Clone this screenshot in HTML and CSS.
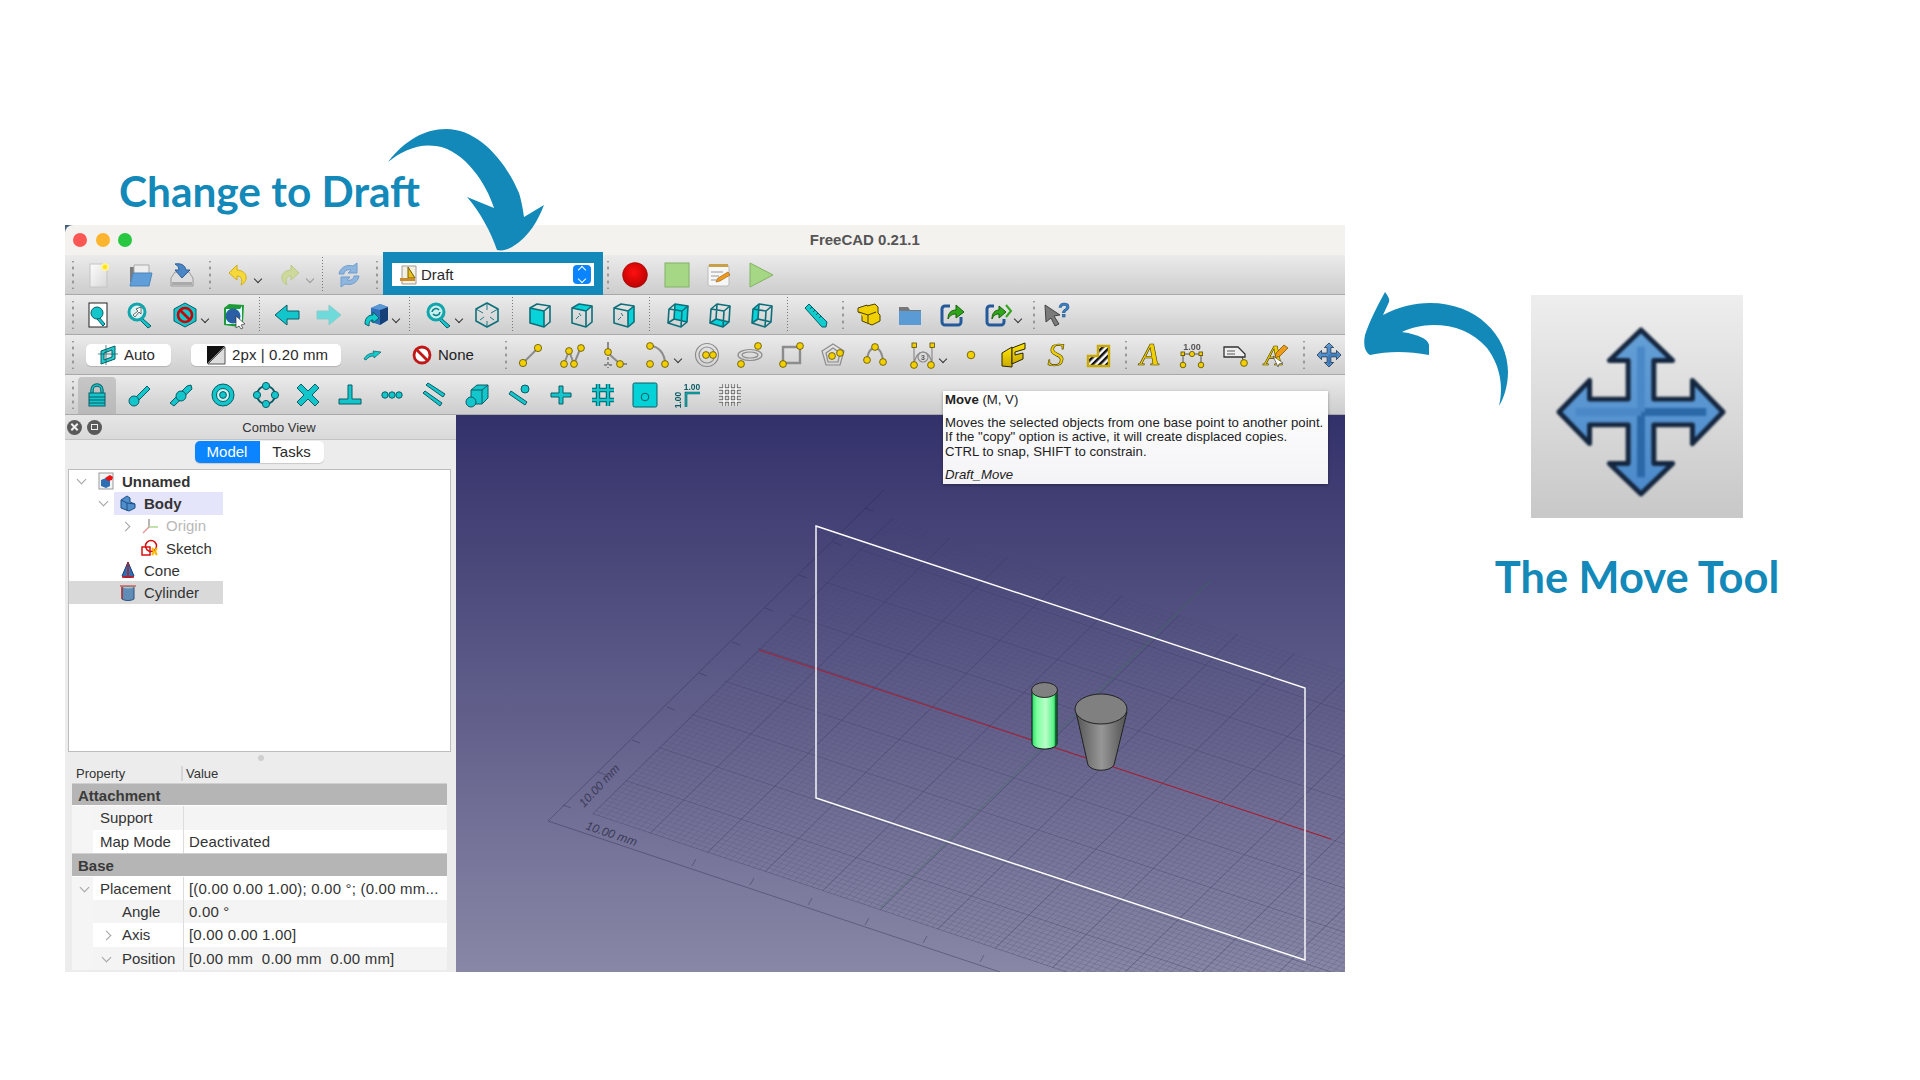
FILE: index.html
```html
<!DOCTYPE html>
<html lang="en">
<head>
    <meta charset="UTF-8">
    <title>FreeCAD Draft Move Tool</title>
    <link rel="stylesheet" href="styles.css">
</head>
<body>
<svg class="defs" width="0" height="0">
    <defs>
        <linearGradient id="moveFill" x1="0" y1="0" x2="0" y2="1">
            <stop offset="0" stop-color="#649fd6"/><stop offset="1" stop-color="#4b8acb"/>
        </linearGradient>
        <linearGradient id="docFill" x1="0" y1="0" x2="1" y2="1">
            <stop offset="0" stop-color="#fdfdfd"/><stop offset="1" stop-color="#d8d8d8"/>
        </linearGradient>
        <linearGradient id="yellowFill" x1="0" y1="0" x2="0" y2="1">
            <stop offset="0" stop-color="#ffe600"/><stop offset="1" stop-color="#c9a800"/>
        </linearGradient>
        <radialGradient id="recFill" cx=".45" cy=".4" r=".65">
            <stop offset="0" stop-color="#ff1010"/><stop offset="1" stop-color="#b80000"/>
        </radialGradient>
        <pattern id="stripes" width="5" height="5" patternUnits="userSpaceOnUse" patternTransform="rotate(45)">
            <rect width="5" height="5" fill="#fff"/><rect width="2.5" height="5" fill="#111"/>
        </pattern>
        <symbol id="move" viewBox="-90 -90 180 180">
            <path fill="url(#moveFill)" stroke="#14263f" stroke-width="5" stroke-linejoin="round" d="M0-83 32-52H13V-13H52V-32L83 0 52 32V13H13V52H32L0 83-32 52H-13V13H-52V32L-83 0-52-32V-13H-13V-52H-32Z"/>
            <path stroke="#2a68a8" stroke-width="8" fill="none" d="M0 0H66M0 0V66"/>
            <path stroke="#4a88c8" stroke-width="8" fill="none" d="M0 0H-66M0 0V-66"/>
        </symbol>
        <symbol id="cube" viewBox="0 0 26 26">
            <path class="edge" d="M3 6 10 2 23 4 23 20 17 25 3 21Z"/>
            <path class="edge" d="M3 6 17 9 23 4M17 9V25"/>
        </symbol>
        <symbol id="cubeBack" viewBox="0 0 26 26">
            <path class="edge" d="M4 7 10 2 23 4 22 20 16 25 3 21Z"/>
            <path class="edge" d="M4 7 17 9 23 4M17 9 16 25M10 2 9 17 3 21M9 17 22 20"/>
        </symbol>
        <symbol id="folder" viewBox="0 0 26 26">
            <path fill="#777" d="M2 5h9l2 3h11v6H2z"/>
            <path fill="#5b9bd5" d="M2 9h22v14H2z"/>
        </symbol>
    </defs>
</svg>

<div class="slide">
    <section class="shot">
        <h2 class="headline headline-left">Change to Draft</h2>
        <div class="window">
            <div class="titlebar">
                <i class="light light-red"></i><i class="light light-amber"></i><i class="light light-green"></i>
                <span class="title-text">FreeCAD 0.21.1</span>
            </div>

            <div class="tb">
                <i class="grip"></i>
                <span class="btn"><svg class="ico" viewBox="0 0 26 26"><rect x="5" y="2" width="17" height="23" fill="url(#docFill)" stroke="#c4c4c4"/><circle cx="20" cy="5" r="4" fill="#fff39a"/><circle cx="20" cy="5" r="2.2" fill="#ffe600"/></svg></span>
                <span class="btn"><svg class="ico" viewBox="0 0 26 26"><path fill="#7c7c7c" d="M3 5h19v15H3z"/><path fill="#eee" stroke="#aaa" d="M7 3h15v10H7z"/><path fill="#5f9ed8" stroke="#4c85bb" d="M6 11h19l-3 13H3z"/></svg></span>
                <span class="btn"><svg class="ico" viewBox="0 0 26 26"><path fill="#ddd" stroke="#999" d="M2 16l4-6h14l4 6v8H2z"/><path fill="#aaa" d="M3 20h20v3H3z"/><path fill="#4a85c5" stroke="#2d5f96" d="M6 2c6-1 10 1 11 6h4l-8 8-7-8h4c0-3-2-5-4-6z"/></svg></span>
                <i class="grip"></i>
                <span class="dd dd-52"><svg class="ico" viewBox="0 0 26 26"><path fill="#f6d83a" stroke="#d0ae10" d="M12 3 4 11l8 7v-4c4 0 6 3 4 9 7-3 8-14-4-15z"/></svg><i class="caret"></i></span>
                <span class="dd dd-52 faded"><svg class="ico" viewBox="0 0 26 26"><path fill="#cdd99a" stroke="#bac98a" d="M14 3l8 8-8 7v-4c-4 0-6 3-4 9-7-3-8-14 4-15z"/></svg><i class="caret"></i></span>
                <i class="sep sep-short"></i>
                <span class="btn"><svg class="ico" viewBox="0 0 26 26"><path fill="#8fb6de" stroke="#6d9ccd" d="M3 12C4 6 10 2 17 4l4-3v10h-9l3-3c-4-1-7 1-7 4z"/><path fill="#8fb6de" stroke="#6d9ccd" d="M23 14c-1 6-7 10-14 8l-4 3V15h9l-3 3c4 1 7-1 7-4z"/></svg></span>
                <i class="grip"></i>
                <div class="combo">
                    <svg class="combo-ico" viewBox="0 0 20 20"><path fill="#f4f0e0" stroke="#999" d="M3 1h14v18H3z"/><path fill="#e8c020" stroke="#705a00" d="M9 2v11h7z"/><path fill="#c98b2b" d="M1 13h15v3H1z"/></svg>
                    <span class="combo-label">Draft</span>
                    <span class="spinner"><i class="spin-up"></i><i class="spin-down"></i></span>
                </div>
                <i class="grip ml10"></i>
                <span class="btn nudge-1"><svg class="ico" viewBox="0 0 26 26"><circle cx="13" cy="13" r="12.4" fill="url(#recFill)" stroke="#8f0000" stroke-width=".6"/></svg></span>
                <span class="btn"><svg class="ico" viewBox="0 0 26 26"><rect x="1" y="1" width="24" height="24" fill="#a6d785" stroke="#82b264"/></svg></span>
                <span class="btn"><svg class="ico" viewBox="0 0 26 26"><rect x="2" y="3" width="21" height="21" rx="2" fill="#f7f7f7" stroke="#bbb"/><path fill="#c9a04a" d="M3 2h19v3H3z"/><path stroke="#999" d="M5 10h12M5 14h8M5 18h10"/><path fill="#f09a1a" stroke="#94590a" stroke-width=".6" d="M10 20l2-4 10-6 2 3-10 6z"/></svg></span>
                <span class="btn"><svg class="ico" viewBox="0 0 26 26"><path fill="#a6d785" stroke="#82b264" d="M2 1l23 12L2 25z"/></svg></span>
            </div>

            <div class="tb">
                <i class="grip"></i>
                <span class="btn"><svg class="ico" viewBox="0 0 26 26"><rect x="4" y="1" width="18" height="24" fill="#fff" stroke="#222"/><path class="t" d="M14 15l6 7-2 2-6-7z"/><circle class="t" cx="12" cy="11" r="6"/></svg></span>
                <span class="btn"><svg class="ico" viewBox="0 0 26 26"><path class="t" d="M15 16l9 8-3 2-8-8z"/><circle cx="10" cy="10" r="8" fill="#d8f2f2" stroke="#12a5ab" stroke-width="3"/><path fill="#fff" stroke="#333" stroke-width=".7" d="M14 5v7l-2-2-4 5-2-2 5-4-2-2z"/></svg></span>
                <span class="dd ml3 dd-49"><svg class="ico" viewBox="0 0 26 26"><path class="t" d="M13 1 24 7V19L13 25 2 19V7z"/><circle cx="13" cy="13" r="7" fill="#1cc" stroke="#c00" stroke-width="2.6"/><path stroke="#c00" stroke-width="2.6" d="M8 8l10 10"/></svg><i class="caret"></i></span>
                <span class="btn"><svg class="ico" viewBox="0 0 26 26"><path fill="#1d9c35" d="M3 6 8 2 23 3 22 20 18 25 3 23Z"/><path fill="#dff" d="M5 7h14l2-3v15l-3 3H5z"/><circle cx="12" cy="14" r="7.5" fill="#2a5fa5"/><path fill="#fff" stroke="#333" stroke-width=".7" d="M15 14l9 8-4 1 2 3-2 1-2-3-3 2z"/></svg></span>
                <i class="sep"></i>
                <span class="btn"><svg class="ico" viewBox="0 0 26 26"><path class="t" d="M1 13 13 3V9H25V17H13V23Z"/></svg></span>
                <span class="btn"><svg class="ico" viewBox="0 0 26 26"><path fill="#6fdada" stroke="#8ccccc" d="M25 13 13 3V9H1V17H13V23Z"/></svg></span>
                <span class="dd ml5"><svg class="ico" viewBox="0 0 26 26"><path fill="#2f6fb8" d="M8 6 17 2 25 5V18L17 23 8 20Z"/><path fill="#163f78" d="M17 8 25 5V18L17 23Z"/><path fill="#5b96d5" d="M8 6 17 2 25 5 17 8Z"/><path fill="#1cc" stroke="#0a5c66" d="M2 22c0-7 4-9 8-9v-3l6 6-6 5v-3c-3 0-4 2-4 6z"/></svg><i class="caret"></i></span>
                <i class="sep"></i>
                <span class="dd ml2 dd-48"><svg class="ico" viewBox="0 0 26 26"><path class="t" d="M15 16l9 8-3 2-8-8z"/><circle cx="10" cy="10" r="8" fill="#c8eeee" stroke="#12a5ab" stroke-width="3"/><path fill="none" stroke="#0a7f85" stroke-width="1.6" d="M6 10a4 4 0 0 1 7-2M14 10a4 4 0 0 1-7 2"/></svg><i class="caret"></i></span>
                <span class="btn"><svg class="ico" viewBox="0 0 26 26"><path class="edge" d="M13 1 24 7V19L13 25 2 19V7z"/><path class="edge thin" d="M13 1v7M2 7l7 4M24 7l-7 4M6 18l4-3M20 18l-4-3M13 25v-6"/></svg></span>
                <i class="sep"></i>
                <span class="btn"><svg class="ico" viewBox="0 0 26 26"><path class="face" d="M3 6 17 9V25L3 21Z"/><use href="#cube"/></svg></span>
                <span class="btn"><svg class="ico" viewBox="0 0 26 26"><path class="face" d="M3 6 10 2 23 4 17 9Z"/><use href="#cube"/><path class="edge thin" d="M7 17l3-3M12 14l-2-3"/></svg></span>
                <span class="btn"><svg class="ico" viewBox="0 0 26 26"><path class="face" d="M17 9 23 4V20L17 25Z"/><use href="#cube"/><path class="edge thin" d="M7 18l3-3M12 14l-2-3"/></svg></span>
                <i class="sep"></i>
                <span class="btn ml1"><svg class="ico" viewBox="0 0 26 26"><path class="face" d="M10 2 23 4 22 20 9 17Z"/><use href="#cubeBack"/></svg></span>
                <span class="btn"><svg class="ico" viewBox="0 0 26 26"><path class="face" d="M3 21 9 17 22 20 16 25Z"/><use href="#cubeBack"/></svg></span>
                <span class="btn"><svg class="ico" viewBox="0 0 26 26"><path class="face" d="M4 7 10 2 9 17 3 21Z"/><use href="#cubeBack"/></svg></span>
                <i class="sep"></i>
                <span class="btn"><svg class="ico" viewBox="0 0 26 26"><path fill="#1cc" stroke="#0a5c66" d="M3 6 7 2 25 20 24 25 20 25Z"/><path stroke="#0a5c66" d="M8 7l2-2M11 10l2-2M14 13l2-2M17 16l2-2"/></svg></span>
                <i class="grip"></i>
                <span class="btn nudge-3"><svg class="ico" viewBox="0 0 26 26"><path class="y" d="M12 4l8-2 3 3v6l2 2v6l-8 4-10-4v-7l-4-2V6l9-3z"/><path class="y" d="M4 10l9 3v8M13 13l8-3"/></svg></span>
                <span class="btn"><svg class="ico" viewBox="0 0 26 26"><use href="#folder"/></svg></span>
                <span class="btn"><svg class="ico" viewBox="0 0 26 26"><path fill="none" stroke="#245a9a" stroke-width="3" d="M11 4H6a3 3 0 0 0-3 3v13a3 3 0 0 0 3 3h13a3 3 0 0 0 3-3v-5"/><path fill="#2fa51a" stroke="#15610a" d="M9 17c0-6 3-9 8-9V3l8 7-8 6v-4c-3 0-6 1-8 5z"/></svg></span>
                <span class="dd ml4"><svg class="ico" viewBox="0 0 26 26"><path fill="none" stroke="#245a9a" stroke-width="3" d="M9 4H5a3 3 0 0 0-3 3v13a3 3 0 0 0 3 3h11a3 3 0 0 0 3-3v-3"/><path fill="#2fa51a" stroke="#15610a" d="M7 17c0-6 3-9 7-9V4l7 6-7 6v-4c-3 0-5 1-7 5z"/><path fill="none" stroke="#2fa51a" stroke-width="2" d="M21 3l5 6-5 6"/></svg><i class="caret"></i></span>
                <i class="grip"></i>
                <span class="btn nudge-5"><svg class="ico" viewBox="0 0 26 26"><path fill="#7a7a7a" stroke="#444" d="M1 3l15 10-6 1 5 8-4 2-4-8-5 4z"/><text class="help-mark" x="14" y="15">?</text></svg></span>
            </div>

            <div class="tb">
                <i class="grip"></i>
                <span class="pill pill-auto"><svg class="pill-ico" viewBox="0 0 20 20"><path fill="#2cc" stroke="#0a5c66" d="M3 6 17 1V14L3 19Z"/><path fill="#e8e8e8" stroke="#0a5c66" d="M6 8 14 5V12L6 15Z"/><path stroke="#0a5c66" stroke-width=".7" d="M0 9H20M8 0V20"/></svg>Auto</span>
                <span class="pill pill-line"><svg class="pill-ico" viewBox="0 0 20 20"><path fill="#111" d="M1 1h18L1 19z"/><path fill="#ddd" stroke="#555" d="M19 2v17H2z"/></svg>2px | 0.20 mm</span>
                <span class="btn ml10"><svg class="ico" viewBox="0 0 26 26"><path fill="#1cc" stroke="#0a5c66" stroke-width=".7" d="M5 17c2-4 6-6 10-6l-1-2 8 1-7 6v-2c-3 0-6 1-8 4z"/></svg></span>
                <span class="none-item"><svg class="none-ico" viewBox="0 0 20 20"><circle cx="10" cy="10" r="8" fill="#fff" stroke="#c01818" stroke-width="2.8"/><path stroke="#c01818" stroke-width="2.8" d="M4 4l12 12"/></svg>None</span>
                <i class="grip"></i>
                <span class="btn nudge-4"><svg class="ico" viewBox="0 0 26 26"><path class="g" d="M6 21 21 6"/><circle class="n" cx="6" cy="21" r="3.6"/><circle class="n" cx="21" cy="6" r="3.6"/></svg></span>
                <span class="btn"><svg class="ico" viewBox="0 0 26 26"><path class="g" d="M5 22 10 9 15 22 22 5"/><circle class="n" cx="5" cy="22" r="3.4"/><circle class="n" cx="10" cy="9" r="3.4"/><circle class="n" cx="15" cy="22" r="3.4"/><circle class="n" cx="22" cy="6" r="3.4"/></svg></span>
                <span class="btn"><svg class="ico" viewBox="0 0 26 26"><path class="g" d="M7 0V11L19 22H26"/><path class="g dash" d="M7 15V26M3 23H13"/><circle class="n" cx="7" cy="10" r="3.4"/><circle class="n" cx="19" cy="22" r="3.4"/></svg></span>
                <span class="dd ml2"><svg class="ico" viewBox="0 0 26 26"><path class="g" d="M5 4C14 4 20 12 20 22"/><circle class="n" cx="5" cy="4" r="3.4"/><circle class="n" cx="5" cy="22" r="3.4"/><circle class="n" cx="20" cy="22" r="3.4"/></svg><i class="caret"></i></span>
                <span class="btn nudge-1"><svg class="ico" viewBox="0 0 26 26"><circle class="g thin" cx="13" cy="13" r="11.5"/><circle class="g thin" cx="13" cy="13" r="8"/><circle class="n" cx="12" cy="13" r="3.4"/><circle class="n" cx="19" cy="13" r="3.4"/></svg></span>
                <span class="btn ml1"><svg class="ico" viewBox="0 0 26 26"><ellipse class="g thin" cx="13" cy="13" rx="12" ry="5.5"/><ellipse class="g thin" cx="13" cy="13" rx="8" ry="3"/><circle class="n" cx="21" cy="4" r="3.4"/><circle class="n" cx="4" cy="22" r="3.4"/></svg></span>
                <span class="btn"><svg class="ico" viewBox="0 0 26 26"><path class="g box" d="M4 5H21V21H4Z"/><circle class="n" cx="21" cy="4" r="3.4"/><circle class="n" cx="4" cy="22" r="3.4"/></svg></span>
                <span class="btn nudge-1"><svg class="ico" viewBox="0 0 26 26"><path class="g thin" d="M13 2 24 9 20 23H6L2 9Z"/><path class="g thin" d="M13 6 20 11 18 20H8L6 11Z"/><circle class="n" cx="12" cy="14" r="3.4"/><circle class="n" cx="20" cy="11" r="3.4"/></svg></span>
                <span class="btn"><svg class="ico" viewBox="0 0 26 26"><path class="g" d="M5 18C6 9 9 6 13 6S20 10 21 19"/><circle class="n" cx="13" cy="5" r="3.4"/><circle class="n" cx="5" cy="18" r="3.4"/><circle class="n" cx="21" cy="20" r="3.4"/></svg></span>
                <span class="dd ml6"><svg class="ico" viewBox="0 0 26 26"><path class="g thin" d="M4 3V22M22 3V22M4 22C7 6 19 6 22 22"/><circle class="g thin" cx="13" cy="15" r="5"/><rect class="n" x="2" y="1" width="4.5" height="4.5"/><rect class="n" x="20" y="1" width="4.5" height="4.5"/><circle class="n" cx="4" cy="23" r="3.4"/><circle class="n" cx="21" cy="23" r="3.4"/><text class="tiny-dark" x="13" y="18">3</text></svg><i class="caret"></i></span>
                <span class="btn nudge-2"><svg class="ico" viewBox="0 0 26 26"><circle class="n" cx="13" cy="13" r="3.8"/></svg></span>
                <span class="btn"><svg class="ico" viewBox="0 0 26 26"><path class="yg" d="M2 11 12 5 12 25 2 24Z"/><path class="yg" d="M12 6 25 1V7L15 10V13L23 11V17L12 22Z"/></svg></span>
                <span class="btn ml1"><svg class="ico" viewBox="0 0 26 26"><text class="draft-letter letter-s" x="13" y="24">S</text></svg></span>
                <span class="btn"><svg class="ico" viewBox="0 0 26 26"><path fill="url(#stripes)" stroke="#c9a800" stroke-width="2.4" d="M3 14H13V4H24V24H3Z"/></svg></span>
                <i class="grip"></i>
                <span class="btn nudge-4"><svg class="ico" viewBox="0 0 26 26"><text class="draft-letter" x="13" y="23">A</text></svg></span>
                <span class="btn"><svg class="ico" viewBox="0 0 26 26"><text class="tiny-dark dim-text" x="13" y="8">1.00</text><path stroke="#555" d="M4 12V21M22 12V21M4 12H22"/><circle class="n" cx="13" cy="12" r="2.6"/><rect class="n" x="2" y="10" width="3.6" height="3.6"/><rect class="n" x="20" y="10" width="3.6" height="3.6"/><circle class="n" cx="4" cy="23" r="2.8"/><circle class="n" cx="22" cy="23" r="2.8"/></svg></span>
                <span class="btn ml1"><svg class="ico" viewBox="0 0 26 26"><path fill="#eee" stroke="#333" stroke-width="1.3" d="M2 5H16L23 12V15H2Z"/><path stroke="#555" d="M5 9h8M5 12h8"/><path fill="none" stroke="#333" d="M20 15 22 20"/><circle class="n" cx="22" cy="21" r="3.4"/></svg></span>
                <span class="btn nudge-1"><svg class="ico" viewBox="0 0 26 26"><text class="draft-letter letter-k" x="11" y="23">A</text><path fill="#f09a1a" stroke="#6a4a00" stroke-width=".7" d="M12 16l1-5L21 3l4 3-8 8z"/><path fill="#fff" stroke="#333" stroke-width=".6" d="M10 14l10 7-4 1-1 3z"/></svg></span>
                <i class="grip"></i>
                <span class="btn nudge-3"><svg class="ico" viewBox="0 0 26 26"><use href="#move"/></svg></span>
            </div>

            <div class="tb tb-snap">
                <i class="grip"></i>
                <span class="btn snap-lock"><svg class="ico" viewBox="0 0 26 26"><path fill="none" stroke="#0a5c66" stroke-width="3.4" d="M8 12V8a5 5 0 0 1 10 0v4"/><path fill="none" stroke="#1cc" stroke-width="1.4" d="M8 12V8a5 5 0 0 1 10 0v4"/><rect class="t" x="5" y="11" width="16" height="13"/><path stroke="#0a5c66" d="M5 15h16M5 18h16M5 21h16"/></svg></span>
                <span class="btn"><svg class="ico" viewBox="0 0 26 26"><path class="t" d="M10 15 21 4 24 7 13 18Z"/><circle class="t" cx="8" cy="19" r="5"/></svg></span>
                <span class="btn"><svg class="ico" viewBox="0 0 26 26"><path class="t" d="M2 21 19 4 23 3 24 7 6 24Z"/><circle class="t" cx="13" cy="14" r="5"/></svg></span>
                <span class="btn"><svg class="ico" viewBox="0 0 26 26"><circle class="t" cx="13" cy="13" r="11"/><circle cx="13" cy="13" r="6.5" fill="#d4f0f0" stroke="#0a5c66"/><circle class="t" cx="13" cy="13" r="3.4"/></svg></span>
                <span class="btn"><svg class="ico" viewBox="0 0 26 26"><circle cx="13" cy="13" r="9" fill="none" stroke="#0a5c66" stroke-width="2"/><circle class="t" cx="13" cy="4" r="3.6"/><circle class="t" cx="13" cy="22" r="3.6"/><circle class="t" cx="4" cy="13" r="3.6"/><circle class="t" cx="22" cy="13" r="3.6"/></svg></span>
                <span class="btn"><svg class="ico" viewBox="0 0 26 26"><path class="t" d="M2 6 6 2 13 9 20 2 24 6 17 13 24 20 20 24 13 17 6 24 2 20 9 13Z"/></svg></span>
                <span class="btn"><svg class="ico" viewBox="0 0 26 26"><path class="t" d="M11 3h4v14h9v5H2v-5h9z"/></svg></span>
                <span class="btn"><svg class="ico" viewBox="0 0 26 26"><circle class="t" cx="6" cy="13" r="3.2"/><circle class="t" cx="13" cy="13" r="3.2"/><circle class="t" cx="20" cy="13" r="3.2"/></svg></span>
                <span class="btn"><svg class="ico" viewBox="0 0 26 26"><path class="t" d="M5 3 7 1 24 12 22 15Z"/><path class="t" d="M2 11 4 9 21 21 19 24Z"/></svg></span>
                <span class="btn"><svg class="ico" viewBox="0 0 26 26"><path class="t" d="M7 8 13 3H24V16L18 22H7Z"/><path class="t" d="M7 8H18V22M18 8 24 3"/><circle class="t" cx="7" cy="20" r="5"/></svg></span>
                <span class="btn"><svg class="ico" viewBox="0 0 26 26"><path class="t" d="M3 12 5 9 21 20 19 23Z"/><circle class="t" cx="19" cy="7" r="4"/></svg></span>
                <span class="btn"><svg class="ico" viewBox="0 0 26 26"><path class="t" d="M11 4h4v7h8v4h-8v7h-4v-7H3v-4h8z"/></svg></span>
                <span class="btn"><svg class="ico" viewBox="0 0 26 26"><path class="db" d="M8 2V24M18 2V24M2 8H24M2 18H24"/><path class="df" d="M8 2V24M18 2V24M2 8H24M2 18H24"/></svg></span>
                <span class="btn"><svg class="ico" viewBox="0 0 26 26"><rect x="1" y="1" width="24" height="24" rx="1.5" fill="#05d2d6" stroke="#0a5c66"/><circle cx="13" cy="15" r="3.8" fill="none" stroke="#0a5c66"/></svg></span>
                <span class="btn"><svg class="ico" viewBox="0 0 26 26"><text class="tiny-teal" x="17" y="8">1.00</text><text class="tiny-teal" transform="rotate(-90 6 18)" x="6" y="18">1.00</text><path fill="none" stroke="#0a5c66" stroke-width="2.6" d="M25 11H11V25"/><path fill="none" stroke="#1cc" stroke-width="1" d="M25 11H11V25"/></svg></span>
                <span class="btn"><svg class="ico" viewBox="0 0 26 26"><path fill="none" stroke="#666" stroke-width="3.4" d="M7 2V24M13 2V24M19 2V24M2 7H24M2 13H24M2 19H24"/><path fill="none" stroke="#fff" stroke-width="1.6" d="M7 2V24M13 2V24M19 2V24M2 7H24M2 13H24M2 19H24"/></svg></span>
            </div>

            <div class="workspace">
                <aside class="combo-view">
                    <div class="dock-head">
                        <span class="dock-btn"><i class="dock-x"></i></span>
                        <span class="dock-btn dock-float"><i></i></span>
                        <span class="dock-title">Combo View</span>
                    </div>
                    <div class="tabs">
                        <span class="tab tab-on">Model</span>
                        <span class="tab">Tasks</span>
                    </div>
                    <div class="tree">
                        <div class="node lvl0 strong">
                            <i class="chev open"></i>
                            <span class="cell"><svg class="node-ico" viewBox="0 0 18 18"><rect x="2" y="1" width="14" height="16" fill="#f4f4f4" stroke="#999"/><path fill="#2d6fb5" d="M4 8l5-2 4 2v6l-4 2-5-2z"/><path fill="#e11" d="M8 6l5-3 3 2-1 3-4 1z"/></svg>Unnamed</span>
                        </div>
                        <div class="node lvl1 strong">
                            <i class="chev open"></i>
                            <span class="cell cell-active"><svg class="node-ico" viewBox="0 0 18 18"><path fill="#4f8dcb" stroke="#1d4f88" d="M2 6l6-4 3 2v4l5 2v4l-6 3-8-3z"/><path fill="none" stroke="#1d4f88" d="M2 6l6 3v8M8 9l8 1"/></svg>Body</span>
                        </div>
                        <div class="node lvl2 dim">
                            <i class="chev"></i>
                            <span class="cell"><svg class="node-ico" viewBox="0 0 18 18"><path stroke="#999" stroke-width="1.4" d="M8 2V10"/><path stroke="#a8d48a" stroke-width="1.4" d="M8 10H17"/><path stroke="#e49a9a" stroke-width="1.4" d="M8 10 2 16"/></svg>Origin</span>
                        </div>
                        <div class="node lvl2">
                            <i class="chev none"></i>
                            <span class="cell"><svg class="node-ico" viewBox="0 0 18 18"><circle cx="10" cy="7" r="5.5" fill="none" stroke="#d81010" stroke-width="1.5"/><rect x="1" y="8" width="8" height="8" fill="none" stroke="#d81010" stroke-width="1.5"/><path fill="none" stroke="#f5b800" stroke-width="2.2" d="M11 9c2 2 2 5 0 7M16 9c-2 2-2 5 0 7"/></svg>Sketch</span>
                        </div>
                        <div class="node lvl1">
                            <i class="chev none"></i>
                            <span class="cell"><svg class="node-ico" viewBox="0 0 18 18"><path fill="#2d6fb5" stroke="#163f78" d="M9 1 15 15c-2 2-10 2-12 0z"/><path stroke="#d81010" stroke-width="1.3" d="M9 1V15M3 16H15"/></svg>Cone</span>
                        </div>
                        <div class="node lvl1 cell-selected">
                            <i class="chev none"></i>
                            <span class="cell"><svg class="node-ico" viewBox="0 0 18 18"><path fill="#5f8db8" stroke="#2a4f78" d="M3 3H15V15C12 17 6 17 3 15Z"/><ellipse cx="9" cy="3" rx="6" ry="1.5" fill="#9cc"/><path stroke="#c22" stroke-width="1.2" d="M1 2H17M3 3V15"/></svg>Cylinder</span>
                        </div>
                    </div>
                    <div class="splitter"><i></i></div>
                    <div class="props">
                        <div class="prop-head"><span>Property</span><span class="prop-head-val">Value</span></div>
                        <div class="prop-group">Attachment</div>
                        <div class="prop-row alt"><span class="prop-name">Support</span><span class="prop-val"></span></div>
                        <div class="prop-row"><span class="prop-name">Map Mode</span><span class="prop-val">Deactivated</span></div>
                        <div class="prop-group">Base</div>
                        <div class="prop-row"><span class="prop-name"><i class="chev open prop-chev"></i>Placement</span><span class="prop-val">[(0.00 0.00 1.00); 0.00 °; (0.00 mm...</span></div>
                        <div class="prop-row alt"><span class="prop-name deep">Angle</span><span class="prop-val">0.00 °</span></div>
                        <div class="prop-row"><span class="prop-name deep"><i class="chev prop-chev2"></i>Axis</span><span class="prop-val">[0.00 0.00 1.00]</span></div>
                        <div class="prop-row alt"><span class="prop-name deep"><i class="chev open prop-chev2"></i>Position</span><span class="prop-val">[0.00 mm&nbsp; 0.00 mm&nbsp; 0.00 mm]</span></div>
                    </div>
                </aside>

                <div class="viewport">
                    <svg class="scene" viewBox="456 415 889 557">
                        <defs>
                            <pattern id="gridMajor" width="100" height="100" patternUnits="userSpaceOnUse" patternTransform="matrix(.575 .192 .335 -.33 592 814)">
                                <path d="M0 0H100M0 0V100" stroke="#2b2b4e" stroke-opacity=".38" stroke-width="2" fill="none"/>
                            </pattern>
                            <pattern id="gridMinor" width="10" height="10" patternUnits="userSpaceOnUse" patternTransform="matrix(.575 .192 .335 -.33 592 814)">
                                <path d="M0 0H10M0 0V10" stroke="#2b2b4e" stroke-width="1" fill="none"/>
                            </pattern>
                            <linearGradient id="gridFade" gradientUnits="userSpaceOnUse" x1="0" y1="520" x2="0" y2="972">
                                <stop offset="0" stop-color="#fff" stop-opacity=".08"/><stop offset="1" stop-color="#fff" stop-opacity=".6"/>
                            </linearGradient>
                            <mask id="minorMask" maskUnits="userSpaceOnUse" x="456" y="415" width="889" height="557">
                                <rect x="456" y="415" width="889" height="557" fill="url(#gridFade)"/>
                            </mask>
                            <linearGradient id="cylFill" x1="0" y1="0" x2="1" y2="0">
                                <stop offset="0" stop-color="#21e063"/><stop offset=".2" stop-color="#7dff9f"/><stop offset=".55" stop-color="#b8ffc8"/><stop offset=".85" stop-color="#5cf58a"/><stop offset="1" stop-color="#0a7a35"/>
                            </linearGradient>
                            <linearGradient id="coneFill" x1="0" y1="0" x2="1" y2="0">
                                <stop offset="0" stop-color="#555"/><stop offset=".5" stop-color="#979797"/><stop offset="1" stop-color="#505050"/>
                            </linearGradient>
                        </defs>
                        <g mask="url(#minorMask)"><path fill="url(#gridMinor)" d="M592 814 1065 972H1345V670L888 517Z"/></g>
                        <path fill="url(#gridMajor)" d="M592 814 1065 972H1345V670L888 517Z"/>
                        <path class="ruler" d="M884 490 548 821 1000 972"/>
                        <path class="ruler" d="M692 866l4-7M750 885l4-7M808 905l4-7M865 925l4-7M923 943l4-7M980 962l4-7M563 805l8 3M598 772l8 3M632 740l8 3M667 707l8 3M699 673l8 3M732 642l8 3M765 608l8 3M799 575l8 3M833 542l8 3M865 508l8 3"/>
                        <text class="ruler-text" transform="translate(584 808) rotate(-47)">10.00 mm</text>
                        <text class="ruler-text" transform="translate(585 829) rotate(19)">10.00 mm</text>
                        <path class="axis-red" d="M759 650 1331 839"/>
                        <path class="axis-green" d="M1211 580 880 908"/>
                        <path class="plane" d="M816 526 1305 688V960L816 798Z"/>
                        <path fill="url(#cylFill)" stroke="#111" d="M1032 690H1057V743C1057 751 1032 751 1032 743Z"/>
                        <path stroke="#062" stroke-width="1.5" d="M1056 692V746"/>
                        <ellipse cx="1044.500" cy="690" rx="13" ry="7.500" fill="#808080" stroke="#222"/>
                        <path fill="url(#coneFill)" stroke="#222" d="M1076 712 1088 765C1092 772 1110 772 1114 765L1127 712Z"/>
                        <ellipse cx="1101" cy="709" rx="26" ry="15" fill="#808080" stroke="#222"/>
                    </svg>
                </div>
            </div>

            <div class="tooltip">
                <p class="tip-title"><b>Move</b> (M, V)</p>
                <p class="tip-body">Moves the selected objects from one base point to another point.<br>If the "copy" option is active, it will create displaced copies.<br>CTRL to snap, SHIFT to constrain.</p>
                <p class="tip-cmd">Draft_Move</p>
            </div>
        </div>
    </section>

    <section class="side">
        <div class="move-card"><svg class="move-big" viewBox="0 0 180 180"><use href="#move"/></svg></div>
        <h2 class="headline headline-right">The Move Tool</h2>
    </section>

    <svg class="callouts" viewBox="0 0 1920 1080">
        <path d="M388 162C405 140 425 129 446 129C478 129 505 160 519 193C522 203 523 210 524 217L544 205C538 220 530 236 512 247C507 250 502 251 497 250C491 232 480 212 467 197L494 208C487 185 465 150 436 146C418 143 400 152 388 162Z"/>
        <path d="M1385 292C1388 296 1390 299 1389 302L1383 315C1398 307 1414 303 1430 303C1476 303 1508 335 1508 372C1508 385 1504 398 1499 406C1503 390 1502 368 1487 348C1473 332 1455 325 1433 325C1422 325 1410 328 1402 332C1415 334 1428 338 1429 345L1429 355C1408 351 1388 351 1370 355C1365 352 1363 345 1365 335C1370 320 1378 305 1385 292Z"/>
    </svg>
</div>
</body>
</html>
```

FILE: styles.css
```css
* {
    box-sizing: border-box;
}
body {
    margin: 0;
    background: #fff;
    font-family: "Liberation Sans", Arial, sans-serif;
    color: #2a2a2a;
}
.defs {
    position: absolute;
}
.slide {
    position: relative;
    width: 1920px;
    height: 1080px;
    display: flex;
    overflow: hidden;
}
.shot {
    margin-left: 65px;
    width: 1280px;
}
.headline {
    margin: 0;
    font-family: Lato, sans-serif;
    font-weight: 700;
    font-size: 42.4px;
    line-height: 50px;
    color: #1289b8;
    white-space: nowrap;
}
.headline-left {
    padding: 166px 0 9px 54px;
}
.headline-right {
    font-size: 43.4px;
}
.side {
    margin-left: 92px;
    width: 400px;
    padding-top: 295px;
    display: flex;
    flex-direction: column;
    align-items: center;
}
.move-card {
    width: 212px;
    height: 223px;
    margin-left: -1px;
    padding: 10px 0 0 8px;
    display: flex;
    align-items: center;
    justify-content: center;
    background: linear-gradient(#eeeeee, #c8c8c8);
}
.move-big {
    width: 178px;
    height: 178px;
    filter: blur(1.1px);
}
.side .headline {
    margin-top: 33px;
}
.callouts {
    position: absolute;
    left: 0;
    top: 0;
    width: 1920px;
    height: 1080px;
    fill: #1289b8;
    pointer-events: none;
}

/* window */
.window {
    position: relative;
    height: 747px;
    overflow: hidden;
    background: #44607f;
}
.titlebar {
    height: 30px;
    display: flex;
    align-items: center;
    padding: 0 0 1px 8px;
    background: #f3f2ef;
    border-radius: 8px 0 0 0;
}
.light {
    flex: none;
    width: 14px;
    height: 14px;
    margin-right: 8.500px;
    border-radius: 50%;
}
.light-red { background: #fc5753; }
.light-amber { background: #fdb52f; }
.light-green { background: #27c840; }
.title-text {
    flex: 1;
    padding-left: 244px;
    text-align: center;
    font-size: 15px;
    font-weight: 700;
    color: #555;
}
.tb {
    position: relative;
    height: 40px;
    display: flex;
    align-items: center;
    padding-left: 4px;
    background: linear-gradient(#ebebeb, #cdcdcd);
    border-bottom: 1px solid #a9a9a9;
    font-size: 15px;
}
.ico {
    width: 26px;
    height: 26px;
    flex: none;
    overflow: visible;
    filter: blur(.3px);
}
.btn {
    flex: none;
    width: 42px;
    height: 39px;
    display: flex;
    align-items: center;
    justify-content: center;
}
.dd {
    flex: none;
    width: 50px;
    height: 39px;
    padding-left: 8px;
    display: flex;
    align-items: center;
}
.dd-52 {
    width: 52px;
}
.dd-49 {
    width: 49px;
}
.dd-48 {
    width: 48px;
}
.dd .caret {
    width: 6px;
    height: 6px;
    margin: 9px 0 0 3.500px;
    border-right: 1.5px solid #333;
    border-bottom: 1.5px solid #333;
    transform: rotate(45deg);
}
.faded .caret {
    border-color: #999;
}
.ml1 { margin-left: 1px; }
.ml2 { margin-left: 2px; }
.ml3 { margin-left: 3px; }
.ml4 { margin-left: 4px; }
.ml5 { margin-left: 5px; }
.ml6 { margin-left: 6px; }
.ml10 { margin-left: 10px; }
.nudge-1 { margin-left: -1px; }
.nudge-2 { margin-left: -2px; }
.nudge-3 { margin-left: -3px; }
.nudge-4 { margin-left: -4px; }
.nudge-5 { margin-left: -5px; }

.grip {
    flex: none;
    width: 8px;
    height: 28px;
    margin: 0 3px;
    background: radial-gradient(circle, #8d8d8d 1px, transparent 1.4px) center / 4px 7px repeat-y;
}
.tb .grip:first-child {
    margin: 0;
}
.tb .grip.ml10 {
    margin-left: 10px;
}
.sep {
    flex: none;
    width: 11px;
    height: 36px;
    background: linear-gradient(#777 50%, transparent 50%) 4px 0 / 1px 3px repeat-y;
}
.sep-short {
    width: 7px;
    background-position: 1px 0;
}

/* draft selector with its blue marker frame */
.combo {
    flex: none;
    position: relative;
    width: 202px;
    height: 23px;
    margin-left: 8px;
    display: flex;
    align-items: center;
    padding: 0 3px 0 7px;
    background: #fff;
    box-shadow: 0 0 0 9px #1289b8, 0 2px 0 9px #1289b8, 0 -2px 0 9px #1289b8;
    font-size: 15px;
}
.combo-ico {
    width: 20px;
    height: 20px;
    margin-right: 2px;
}
.combo-label {
    flex: 1;
}
.spinner {
    width: 18px;
    height: 19px;
    border-radius: 4px;
    background: #0a84ff;
    display: flex;
    flex-direction: column;
    align-items: center;
    justify-content: center;
    gap: 3px;
}
.spin-up,
.spin-down {
    width: 6px;
    height: 6px;
    border-left: 1.5px solid #fff;
    border-top: 1.5px solid #fff;
    transform: rotate(45deg);
}
.spin-down {
    transform: rotate(225deg);
}

/* option pills */
.pill {
    flex: none;
    height: 22px;
    display: flex;
    align-items: center;
    background: #fff;
    border-radius: 5px;
    box-shadow: 0 1px 1px rgba(0, 0, 0, .15);
}
.pill-ico {
    width: 20px;
    height: 20px;
    margin-right: 6px;
}
.pill-auto {
    width: 85px;
    margin-left: 9px;
    padding-left: 12px;
}
.pill-line {
    width: 150px;
    margin-left: 20px;
    padding-left: 15px;
    letter-spacing: .1px;
}
.none-item {
    flex: none;
    width: 87px;
    margin-left: 19px;
    display: flex;
    align-items: center;
    color: #222;
}
.none-ico {
    width: 20px;
    height: 20px;
    margin-right: 6px;
}
.snap-lock {
    width: 38px;
    margin: 1px 2px 0 1px;
    border-radius: 4px 4px 0 0;
    background: linear-gradient(#c6c6c6, #b9b9b9);
}
.tb-snap .btn {
    width: 42.2px;
}
.tb-snap .snap-lock {
    width: 38px;
    height: 37px;
}

/* svg icon paints */
.t { fill: #12c6cc; stroke: #0a5c66; stroke-width: 1; }
.y { fill: #f0d000; stroke: #4b4000; stroke-width: 1; }
.yg { fill: url(#yellowFill); stroke: #2a2400; stroke-width: 1; }
.n { fill: #f2d000; stroke: #5a4c00; stroke-width: .8; }
.g { fill: none; stroke: #8c8c8c; stroke-width: 2; }
.g.thin { stroke-width: 1.2; }
.g.box { stroke-width: 2.4; }
.g.dash { stroke-dasharray: 3 2; }
.edge { fill: none; stroke: #0d6f7a; stroke-width: 1.6; stroke-linejoin: round; }
.edge.thin { stroke-width: .9; }
.face { fill: #07d3d8; }
.db { fill: none; stroke: #0a5c66; stroke-width: 4.4; }
.df { fill: none; stroke: #12c6cc; stroke-width: 2.4; }
.help-mark {
    font: 700 20px "Liberation Sans", sans-serif;
    fill: #3b7fc0;
    stroke: #1d4f88;
    stroke-width: .5;
}
.tiny-dark {
    font: 700 7px "Liberation Sans", sans-serif;
    fill: #555;
    text-anchor: middle;
}
.dim-text {
    font-size: 9px;
}
.tiny-teal {
    font: 700 8.5px "Liberation Sans", sans-serif;
    fill: #0a5c66;
    text-anchor: middle;
}
.draft-letter {
    font: italic 700 31px "Liberation Serif", serif;
    fill: #f0d000;
    stroke: #4b4000;
    stroke-width: .6;
    text-anchor: middle;
}
.letter-s {
    font-size: 34px;
    font-weight: 400;
}
.letter-k {
    font-size: 29px;
}

/* combo view */
.workspace {
    display: flex;
    height: 557px;
}
.combo-view {
    flex: none;
    width: 391px;
    background: #ececec;
}
.dock-head {
    position: relative;
    height: 25px;
    display: flex;
    align-items: center;
    padding-left: 2px;
    background: linear-gradient(#e6e6e6, #d9d9d9);
    border-bottom: 1px solid #c4c4c4;
}
.dock-btn {
    width: 15px;
    height: 15px;
    margin-right: 5px;
    border-radius: 50%;
    background: #5a5a5a;
    display: flex;
    align-items: center;
    justify-content: center;
}
.dock-x {
    position: relative;
    width: 9px;
    height: 2px;
    background: #eee;
    transform: rotate(45deg);
}
.dock-x::after {
    content: "";
    position: absolute;
    width: 9px;
    height: 2px;
    background: #eee;
    transform: rotate(90deg);
}
.dock-float i {
    width: 7px;
    height: 6px;
    border: 1.3px solid #eee;
}
.dock-title {
    position: absolute;
    left: 0;
    right: 0;
    text-align: center;
    font-size: 13px;
    padding-left: 37px;
    color: #333;
}
.tabs {
    display: flex;
    justify-content: center;
    height: 24px;
    padding: 1px 3px 0 0;
    font-size: 15px;
}
.tab {
    width: 64px;
    height: 22px;
    line-height: 22px;
    text-align: center;
    background: #fff;
    border-radius: 0 5px 5px 0;
    box-shadow: 0 1px 1px rgba(0, 0, 0, .15);
}
.tab-on {
    width: 65px;
    background: #0a84ff;
    color: #fff;
    border-radius: 5px 0 0 5px;
}
.tree {
    height: 283px;
    margin: 5px 5px 0 3px;
    background: #fff;
    border: 1px solid #bdbdbd;
    font-size: 15px;
}
.node {
    width: 154px;
    height: 22.3px;
    display: flex;
    align-items: center;
    color: #333;
}
.lvl0 { padding-left: 7px; }
.lvl1 { padding-left: 29px; }
.lvl2 { padding-left: 51px; }
.strong { font-weight: 700; }
.dim { color: #b8b8b8; }
.chev {
    flex: none;
    position: relative;
    width: 12px;
    height: 12px;
    margin-right: 4px;
}
.chev::before {
    content: "";
    position: absolute;
    left: 2px;
    top: 3px;
    width: 6px;
    height: 6px;
    border-right: 1.2px solid #a2a2a2;
    border-bottom: 1.2px solid #a2a2a2;
    transform: rotate(-45deg);
}
.chev.open::before {
    transform: rotate(45deg);
    top: 1px;
}
.chev.none::before {
    display: none;
}
.cell {
    flex: 1;
    height: 100%;
    display: flex;
    align-items: center;
    padding-left: 5px;
}
.cell-active {
    background: #e4e4fb;
}
.cell-selected {
    background: #d9d9d9;
}
.node-ico {
    flex: none;
    width: 18px;
    height: 18px;
    margin-right: 7px;
    filter: blur(.25px);
}
.splitter {
    height: 11px;
    display: flex;
    align-items: center;
    justify-content: center;
}
.splitter i {
    width: 6px;
    height: 6px;
    border-radius: 50%;
    background: #cfcfcf;
}

/* property table */
.props {
    margin: 0 9px 0 7px;
    font-size: 15px;
    color: #333;
}
.prop-head {
    display: flex;
    height: 20px;
    align-items: center;
    padding-left: 4px;
    font-size: 13px;
    background: #ececec;
}
.prop-head span:first-child {
    width: 105px;
}
.prop-head-val {
    padding-left: 3px;
    border-left: 2px solid #d6d6d6;
}
.prop-group {
    height: 23.4px;
    line-height: 23.4px;
    padding-left: 6px;
    font-weight: 700;
    background: #b5b5b5;
    border-bottom: 1px solid #fff;
    border-top: 1px solid #d0d0d0;
    color: #3a3a3a;
}
.prop-row {
    display: flex;
    height: 23.4px;
    line-height: 23.4px;
    background: linear-gradient(90deg, #f5f5f5 21px, #fff 21px);
}
.prop-row.alt {
    background: linear-gradient(90deg, #f5f5f5 21px, #f4f4f4 21px);
}
.prop-name {
    position: relative;
    flex: none;
    width: 112px;
    padding-left: 28px;
    border-right: 1px solid #dcdcdc;
    white-space: nowrap;
}
.prop-name.deep {
    padding-left: 50px;
}
.prop-chev,
.prop-chev2 {
    position: absolute;
    top: 6px;
    left: 7px;
}
.prop-chev2 {
    left: 29px;
}
.prop-val {
    padding-left: 5px;
    letter-spacing: .2px;
    white-space: nowrap;
}

/* 3d view */
.viewport {
    flex: 1;
    background: linear-gradient(#33316a, #8987a6);
}
.scene {
    display: block;
    width: 889px;
    height: 557px;
}
.ruler {
    fill: none;
    stroke: #2b2b4e;
    stroke-opacity: .5;
    stroke-width: .8;
}
.ruler-text {
    font: italic 12px "Liberation Sans", sans-serif;
    fill: #3a3a58;
}
.axis-red {
    stroke: #b01a2c;
    stroke-width: 1;
}
.axis-green {
    stroke: #2f7a4a;
    stroke-opacity: .65;
    stroke-width: .8;
}
.plane {
    fill: none;
    stroke: #fff;
    stroke-width: 1.4;
}

/* hover tooltip */
.tooltip {
    position: absolute;
    left: 878px;
    top: 166px;
    width: 385px;
    height: 93px;
    padding: 2px 2px;
    font-size: 13.200px;
    line-height: 14.6px;
    color: #222;
    background: linear-gradient(#fff, #f4f4f7);
    box-shadow: 0 1px 3px rgba(0, 0, 0, .35);
}
.tooltip p {
    margin: 0;
}
.tip-title {
    padding-bottom: 8px;
}
.tip-body {
    padding-bottom: 9px;
}
.tip-cmd {
    font-style: italic;
}
```
